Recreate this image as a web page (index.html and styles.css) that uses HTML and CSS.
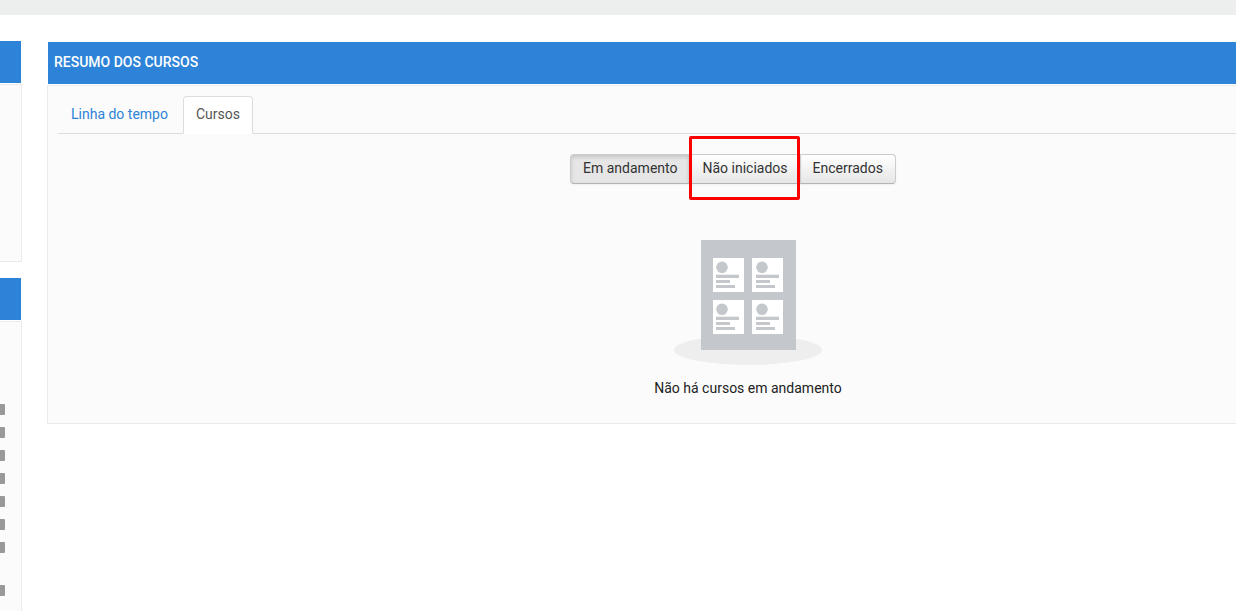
FILE: index.html
```html
<!DOCTYPE html>
<html lang="pt-BR">
<head>
<meta charset="utf-8">
<title>Resumo dos cursos</title>
<link rel="stylesheet" href="styles.css">
</head>
<body>
<div class="topbar"></div>
<div class="page">
  <aside class="sidebar">
    <section class="block">
      <div class="block-header"></div>
      <div class="block-body block-short"></div>
    </section>
    <section class="block block-fill">
      <div class="block-header"></div>
      <div class="block-body block-list">
        <span class="mark"></span>
        <span class="mark"></span>
        <span class="mark"></span>
        <span class="mark"></span>
        <span class="mark"></span>
        <span class="mark"></span>
        <span class="mark"></span>
        <span class="mark mark-apart"></span>
      </div>
    </section>
  </aside>
  <main class="overview">
    <h2 class="overview-header">RESUMO DOS CURSOS</h2>
    <div class="overview-body">
      <nav class="tabs">
        <a class="tab" href="#timeline">Linha do tempo</a>
        <a class="tab tab-active" href="#courses">Cursos</a>
      </nav>
      <div class="filters">
        <button type="button" class="filter filter-active">Em andamento</button>
        <div class="highlighted">
          <button type="button" class="filter">Não iniciados</button>
          <span class="highlight"></span>
        </div>
        <button type="button" class="filter">Encerrados</button>
      </div>
      <div class="empty">
        <svg class="empty-art" viewBox="0 0 148 125" width="148" height="125" aria-hidden="true">
          <defs>
            <g id="card-lines" fill="#c4c8cc">
              <circle cx="9" cy="9.300" r="5.800"/>
              <rect x="3" y="16.700" width="23" height="3.300"/>
              <rect x="3" y="22" width="14" height="3"/>
              <rect x="3" y="27" width="19" height="3"/>
            </g>
          </defs>
          <ellipse cx="74" cy="110" rx="74" ry="15" fill="#eeeeee"/>
          <rect x="27" y="0" width="95" height="110" fill="#c4c8cc"/>
          <g fill="#ffffff">
            <rect x="39" y="18" width="31" height="34"/>
            <rect x="78" y="18" width="31" height="34"/>
            <rect x="39" y="60" width="31" height="34"/>
            <rect x="78" y="60" width="31" height="34"/>
          </g>
          <use href="#card-lines" x="39" y="18"/>
          <use href="#card-lines" x="79" y="18"/>
          <use href="#card-lines" x="39" y="60"/>
          <use href="#card-lines" x="79" y="60"/>
        </svg>
        <p class="empty-text">Não há cursos em andamento</p>
      </div>
    </div>
  </main>
</div>
</body>
</html>
```
FILE: styles.css
```css
* { box-sizing: border-box; }

body {
  margin: 0;
  min-height: 100vh;
  display: flex;
  flex-direction: column;
  overflow: hidden;
  background: #fff;
  color: #222;
  font: 14px/20px Roboto, "Liberation Sans", sans-serif;
}

.topbar { height: 15px; background: #edefee; }

.page { flex: 1; display: flex; gap: 25px; }

.sidebar {
  flex: none;
  width: 22px;
  padding-top: 26px;
  display: flex;
  flex-direction: column;
  gap: 16px;
}

.block-fill { flex: 1; display: flex; flex-direction: column; }
.block-header { height: 42px; margin-right: 1px; background: #2d83d7; }

.block-body {
  margin-top: 1px;
  background: #fbfbfb;
  border: 1px solid #ebebeb;
  border-left: 0;
}

.block-short { height: 178px; }

.block-list {
  flex: 1;
  border-bottom: 0;
  padding: 82px 0 14px;
  display: flex;
  flex-direction: column;
  gap: 12px;
}

.mark {
  width: 5px;
  height: 11px;
  background: #999;
  border-radius: 0 1px 1px 0;
}

.mark-apart { margin-top: 20px; }

/* The overview column runs on past the right edge of the window. */
.overview { flex: 1; margin-right: -213px; padding-top: 27px; }

.overview-header {
  margin: 0 0 0 1px;
  padding: 10px 6px 12px;
  background: #2d83d7;
  color: #fff;
  font-size: 14px;
  line-height: 20px;
  font-weight: 500;
}

.overview-body {
  margin-top: 1px;
  padding: 10px 10px 25px;
  background: #fbfbfb;
  border: 1px solid #ebebeb;
}

.tabs { display: flex; gap: 2px; border-bottom: 1px solid #ddd; }

.tab {
  margin-bottom: -1px;
  padding: 7px 12px 9px;
  border: 1px solid transparent;
  border-radius: 4px 4px 0 0;
  color: #2d83d7;
  text-decoration: none;
}

.tab-active {
  background: #fff;
  border-color: #ddd #ddd #fff;
  color: #555;
}

.filters {
  display: flex;
  justify-content: center;
  margin: 20px 30px 0 0;
}

.filter {
  display: block;
  padding: 3px 12px 5px;
  border: 1px solid #ccc;
  border-bottom-color: #b3b3b3;
  background: linear-gradient(#fff, #e6e6e6);
  box-shadow: inset 0 1px 0 rgba(255, 255, 255, .2), 0 1px 2px rgba(0, 0, 0, .05);
  color: #333;
  font: inherit;
}

.filter:first-child { border-radius: 4px 0 0 4px; }
.filter:last-child { border-radius: 0 4px 4px 0; }

.filter-active {
  background: #e6e6e6;
  box-shadow: inset 0 2px 4px rgba(0, 0, 0, .15), 0 1px 2px rgba(0, 0, 0, .05);
}

.highlighted { position: relative; margin: 0 -1px; }
.highlighted .filter { border-radius: 0; }

.highlight {
  position: absolute;
  inset: -18px 1px -16px 0;
  border: 3px solid #f00;
  border-radius: 2px;
  pointer-events: none;
}

.empty {
  margin-top: 56px;
  display: flex;
  flex-direction: column;
  align-items: center;
}

.empty-art { display: block; }
.empty-text { margin: 13px 0 0; }
```
